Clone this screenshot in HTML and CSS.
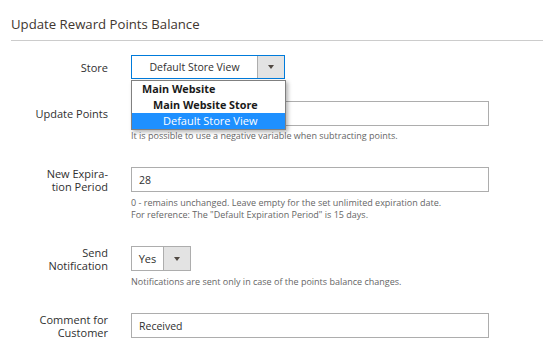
FILE: index.html
```html
<!DOCTYPE html>
<html lang="en">
<head>
    <meta charset="UTF-8">
    <meta name="viewport" content="width=device-width, initial-scale=1.0">
    <title>Update Reward Points Balance</title>
    <link rel="stylesheet" href="styles.css">
</head>
<body>
    <div class="page">
        <h2 class="section-title">Update Reward Points Balance</h2>

        <form class="points-form">
            <div class="field field-store">
                <label class="field-label">Store</label>
                <div class="field-control">
                    <div class="select select-store">
                        <span class="select-value">Default Store View</span>
                        <span class="select-arrow"></span>
                    </div>
                    <ul class="select-menu">
                        <li class="menu-group">Main Website</li>
                        <li class="menu-group menu-sub">Main Website Store</li>
                        <li class="menu-option is-selected">Default Store View</li>
                    </ul>
                </div>
            </div>

            <div class="field">
                <label class="field-label" for="points">Update Points</label>
                <input class="text-input" type="text" id="points">
                <div class="field-note">It is possible to use a negative variable when subtracting points.</div>
            </div>

            <div class="field">
                <label class="field-label" for="expiration">New Expira-<br>tion Period</label>
                <input class="text-input" type="text" id="expiration" value="28">
                <div class="field-note">0 - remains unchanged. Leave empty for the set unlimited expiration date.<br>For reference: The "Default Expiration Period" is 15 days.</div>
            </div>

            <div class="field">
                <label class="field-label">Send<br>Notification</label>
                <div class="select select-small">
                    <span class="select-value">Yes</span>
                    <span class="select-arrow"></span>
                </div>
                <div class="field-note">Notifications are sent only in case of the points balance changes.</div>
            </div>

            <div class="field">
                <label class="field-label" for="comment">Comment for<br>Customer</label>
                <input class="text-input" type="text" id="comment" value="Received">
            </div>
        </form>
    </div>
</body>
</html>
```

FILE: styles.css
```css
body {
    margin: 0;
    font-family: "Open Sans", "Liberation Sans", sans-serif;
    background-color: #fff;
    color: #303030;
}
.section-title {
    margin: 15px 0 0 11px;
    padding-bottom: 6px;
    border-bottom: 1px solid #ccc;
    font-size: 13.2px;
    font-weight: normal;
    line-height: 19px;
    color: #41362f;
}
.points-form {
    padding-left: 11px;
    margin-top: 14px;
}
.field {
    display: grid;
    grid-template-columns: 97px 358px;
    column-gap: 23px;
    margin-bottom: 25px;
}
.field-store {
    margin-bottom: 22px;
}
.field-label {
    grid-column: 1;
    grid-row: 1;
    align-self: center;
    text-align: right;
    font-size: 11px;
    line-height: 13px;
    white-space: nowrap;
}
.field-control {
    position: relative;
}
.text-input {
    grid-column: 2;
    grid-row: 1;
    box-sizing: border-box;
    width: 100%;
    height: 25px;
    margin: 0;
    padding: 0 7px;
    border: 1px solid #adadad;
    font-family: inherit;
    font-size: 10.5px;
    color: #303030;
    outline: none;
}
.field-note {
    grid-column: 2;
    margin-top: 4px;
    font-size: 9px;
    line-height: 12px;
    color: #666;
}
.select {
    grid-column: 2;
    grid-row: 1;
    box-sizing: border-box;
    display: flex;
    height: 25px;
    border: 1px solid #adadad;
    background-color: #fff;
    font-size: 10.5px;
}
.select-store {
    width: 154px;
    height: 24px;
    border-color: #007bdb;
}
.select-small {
    width: 60px;
    font-size: 11px;
}
.select-value {
    flex: 1;
    display: flex;
    align-items: center;
    justify-content: center;
}
.select-arrow {
    width: 26px;
    border-left: 1px solid #adadad;
    background-color: #e3e3e3;
    position: relative;
}
.select-arrow::after {
    content: "";
    position: absolute;
    left: 50%;
    top: 50%;
    margin: -2px 0 0 -3px;
    border-left: 3px solid transparent;
    border-right: 3px solid transparent;
    border-top: 4px solid #514943;
}
.select-menu {
    position: absolute;
    top: 25px;
    left: 0;
    z-index: 2;
    box-sizing: border-box;
    width: 155px;
    margin: 0;
    padding: 0;
    list-style: none;
    border: 1px solid #808080;
    background-color: #fff;
    box-shadow: 2px 2px 4px rgba(0, 0, 0, 0.3);
    font-size: 10.8px;
    color: #1a1a1a;
}
.select-menu li {
    height: 16px;
    line-height: 16px;
    padding-left: 10px;
}
.menu-group {
    font-weight: bold;
}
.select-menu .menu-sub {
    padding-left: 21px;
}
.select-menu .menu-option {
    padding-left: 31px;
    font-size: 11px;
}
.is-selected {
    background-color: #1e90ff;
    color: #fff;
}
```
